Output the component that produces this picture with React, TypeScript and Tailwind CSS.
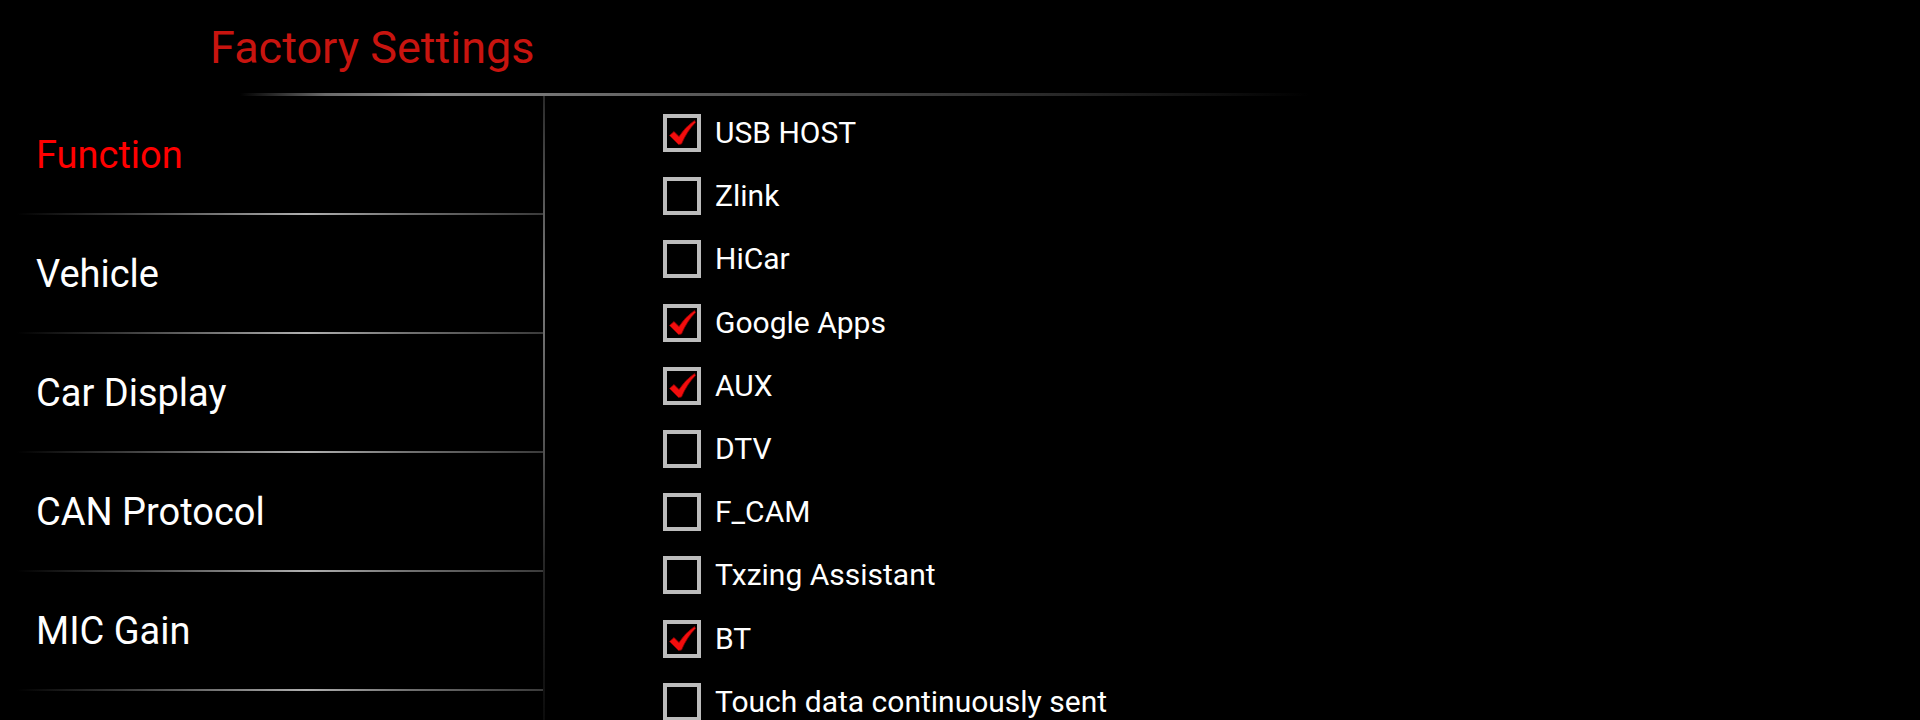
const menu = ['Function', 'Vehicle', 'Car Display', 'CAN Protocol', 'MIC Gain'];

const options = [
  { label: 'USB HOST', on: true },
  { label: 'Zlink', on: false },
  { label: 'HiCar', on: false },
  { label: 'Google Apps', on: true },
  { label: 'AUX', on: true },
  { label: 'DTV', on: false },
  { label: 'F_CAM', on: false },
  { label: 'Txzing Assistant', on: false },
  { label: 'BT', on: true },
  { label: 'Touch data continuously sent', on: false },
];

function CheckMark() {
  return (
    <svg viewBox="0 0 30 30" className="absolute left-0 top-0 w-[30px] h-[30px]">
      <path
        d="M2.5 17.5 L7 13.5 L12 18.5 Q18 9 27.5 2.5 L28.5 4.5 Q20 13 14.5 26 L11.5 26.5 Z"
        fill="#f30d0d"
        stroke="#8a0000"
        strokeWidth="0.8"
        strokeLinejoin="round"
      />
    </svg>
  );
}

function CheckRow({ label, on }: { label: string; on: boolean }) {
  return (
    <div className="h-[63.2px] shrink-0 flex items-start">
      <div className="relative w-[38px] h-[38px] border-[4px] border-[#bcbcbc] bg-black shrink-0">
        {on && <CheckMark />}
      </div>
      <span className="ml-[14px] h-[38px] flex items-center text-[30px] text-white leading-none whitespace-nowrap">{label}</span>
    </div>
  );
}

export default function App() {
  return (
    <div className="w-[1920px] h-[720px] bg-black overflow-hidden font-['Roboto',sans-serif]">
      <div className="pt-[25px] pl-[210px]">
        <h1 className="text-[45px] leading-none text-[#c8140f] font-normal">Factory Settings</h1>
      </div>
      <div className="mt-[23px] ml-[240px] w-[1070px] h-[3px] bg-[linear-gradient(90deg,rgba(0,0,0,0)_0%,#6a6a6a_8%,#8a8a8a_18%,#5a5a5a_42%,#2a2a2a_75%,rgba(0,0,0,0)_100%)]" />

      <div className="flex h-[624px] overflow-hidden">
        <div className="w-[543px] flex flex-col">
          {menu.map((m, i) => (
            <div key={m} className="h-[119px] flex flex-col shrink-0">
              <div className="flex-1 flex items-center pl-[36px]">
                <span className={`text-[38px] leading-none ${i === 0 ? 'text-[#ff0000]' : 'text-white'}`}>{m}</span>
              </div>
              <div className="ml-[17px] h-[2px] bg-[linear-gradient(90deg,rgba(0,0,0,0)_0%,#3a3a3a_20%,#b0b0b0_55%,#707070_75%,#3a3a3a_100%)]" />
            </div>
          ))}
        </div>
        <div className="w-[2px] bg-[linear-gradient(180deg,#2a2a2a_0%,#7a7a7a_30%,#555555_55%,#262626_75%,#0c0c0c_100%)]" />
        <div className="pl-[118px] pt-[18px] flex flex-col">
          {options.map((o) => (
            <CheckRow key={o.label} label={o.label} on={o.on} />
          ))}
        </div>
      </div>
    </div>
  );
}
